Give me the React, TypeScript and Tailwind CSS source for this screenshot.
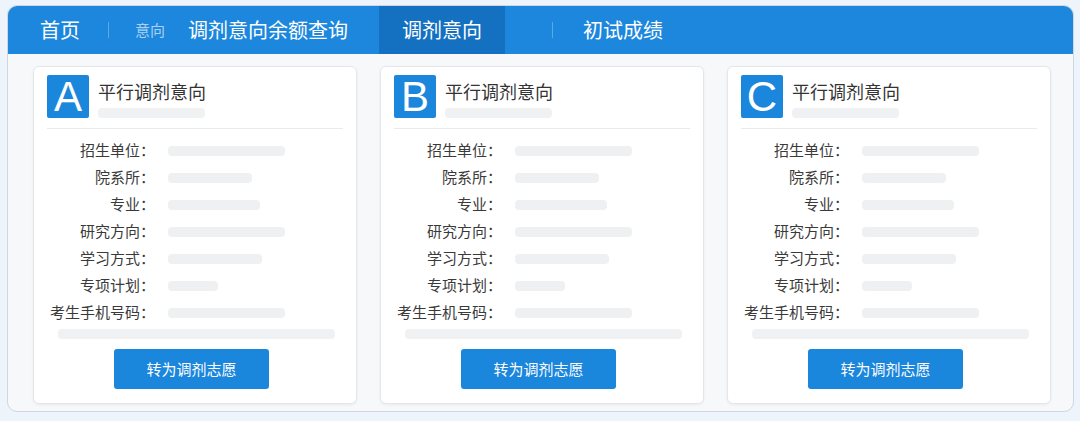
const rows: { label: string; w: number }[] = [
  { label: "招生单位：", w: 117 },
  { label: "院系所：", w: 84 },
  { label: "专业：", w: 92 },
  { label: "研究方向：", w: 117 },
  { label: "学习方式：", w: 94 },
  { label: "专项计划：", w: 50 },
  { label: "考生手机号码：", w: 117 },
];

function Card({ letter }: { letter: string }) {
  return (
    <div className="w-[324px] bg-white rounded-[6px] border border-[#e3e7ec] shadow-[0_1px_3px_rgba(0,0,0,0.06)] px-[13px] pt-[8px] pb-[14px]">
      <div className="flex items-start">
        <div className="w-[42px] h-[43px] bg-[#1a86dc] rounded-[2px] flex items-center justify-center text-white text-[42px] leading-none font-['Liberation_Sans',sans-serif]">
          {letter}
        </div>
        <div className="ml-[9px] pt-[4px]">
          <div className="text-[18px] leading-[24px] text-[#333]">平行调剂意向</div>
          <div className="mt-[5px] w-[107px] h-[10px] bg-[#f0f1f3] rounded-sm" />
        </div>
      </div>
      <div className="mt-[10px] h-px bg-[#e8eaed]" />
      <div className="mt-[8px]">
        {rows.map((r) => (
          <div key={r.label} className="flex items-center h-[27px]">
            <div className="w-[108px] text-right text-[15px] text-[#3a3a3a] whitespace-nowrap">{r.label}</div>
            <div className="ml-[13px] h-[10px] bg-[#eff0f2] rounded-sm" style={{ width: r.w }} />
          </div>
        ))}
      </div>
      <div className="mt-[3px] ml-[11px] w-[277px] h-[10px] bg-[#f0f1f3] rounded-sm" />
      <button className="mt-[10px] ml-[67px] block w-[155px] h-[40px] bg-[#1a86dc] rounded-[3px] text-white text-[15px]">
        转为调剂志愿
      </button>
    </div>
  );
}

export default function App() {
  return (
    <div className="w-[1080px] h-[421px] bg-[#eef4fb] pt-[5px] pl-[7px] font-['Noto_Sans_CJK_SC',sans-serif]">
      <div className="w-[1067px] h-[407px] rounded-[10px] border border-[#cfd6de] bg-[#f6f8fa] overflow-hidden">
        <div className="h-[48px] bg-[#1c87dc] flex items-center pl-[32px] text-white text-[20px]">
          <span>首页</span>
          <span className="ml-[28px] w-px h-[16px] bg-[#5aa9e8]" />
          <span className="ml-[26px] text-[15px] text-[#a8d1f3]">意向</span>
          <span className="ml-[23px]">调剂意向余额查询</span>
          <span className="ml-[31px] self-stretch flex items-center px-[23px] bg-[#1471c1]">调剂意向</span>
          <span className="ml-[47px] w-px h-[16px] bg-[#5aa9e8]" />
          <span className="ml-[30px]">初试成绩</span>
        </div>
        <div className="flex gap-[23px] pl-[25px] pt-[12px]">
          <Card letter="A" />
          <Card letter="B" />
          <Card letter="C" />
        </div>
      </div>
    </div>
  );
}
